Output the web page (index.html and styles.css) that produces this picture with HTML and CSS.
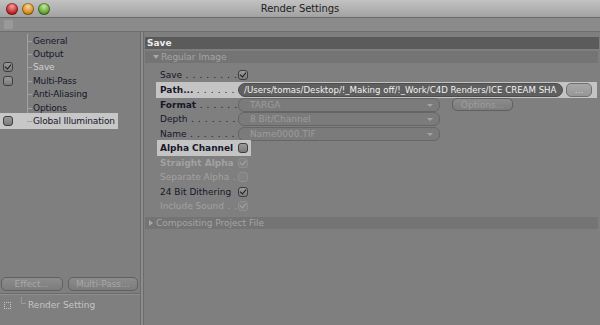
FILE: index.html
```html
<!DOCTYPE html>
<html lang="en">
<head>
    <meta charset="UTF-8">
    <title>Render Settings</title>
    <link rel="stylesheet" href="styles.css">
</head>
<body>
    <div class="window">
        <header class="titlebar">
            <div class="lights">
                <span class="light red"></span>
                <span class="light orange"></span>
                <span class="light green"></span>
            </div>
            <h1>Render Settings</h1>
        </header>
        <div class="toolbar"><span class="grip"></span></div>

        <div class="content">
            <aside class="sidebar">
                <ul class="tree">
                    <li><span class="box none"></span><span class="label">General</span></li>
                    <li><span class="box none"></span><span class="label">Output</span></li>
                    <li><span class="box checked"></span><span class="label dim">Save</span></li>
                    <li><span class="box"></span><span class="label">Multi-Pass</span></li>
                    <li><span class="box none"></span><span class="label">Anti-Aliasing</span></li>
                    <li><span class="box none"></span><span class="label">Options</span></li>
                    <li class="hl"><span class="box"></span><span class="label">Global Illumination</span></li>
                </ul>
                <div class="side-buttons">
                    <button class="btn">Effect...</button>
                    <button class="btn">Multi-Pass...</button>
                </div>
                <div class="side-footer">
                    <span class="node-icon"></span>
                    <span class="footer-label">Render Setting</span>
                </div>
            </aside>

            <main class="panel">
                <div class="panel-title">Save</div>
                <div class="group open">Regular Image</div>

                <div class="rows">
                    <div class="row"><span class="key">Save</span><span class="box checked"></span></div>
                    <div class="row hl-wide"><span class="key bold">Path...</span>
                        <span class="path">/Users/tomas/Desktop/!_Making off/!_Work/C4D Renders/ICE CREAM SHA</span>
                        <span class="btn small">...</span>
                    </div>
                    <div class="row"><span class="key bold">Format</span>
                        <span class="select">TARGA</span>
                        <span class="btn options">Options...</span>
                    </div>
                    <div class="row"><span class="key">Depth</span><span class="select">8 Bit/Channel</span></div>
                    <div class="row"><span class="key">Name</span><span class="select">Name0000.TIF</span></div>
                    <div class="row"><span class="key bold hl-key">Alpha Channel</span><span class="box"></span></div>
                    <div class="row"><span class="key bold off nodots">Straight Alpha</span><span class="box checked off"></span></div>
                    <div class="row"><span class="key off">Separate Alpha</span><span class="box off"></span></div>
                    <div class="row"><span class="key nodots">24 Bit Dithering</span><span class="box checked"></span></div>
                    <div class="row"><span class="key off">Include Sound</span><span class="box checked off"></span></div>
                </div>

                <div class="group closed">Compositing Project File</div>
            </main>
        </div>
    </div>
</body>
</html>
```

FILE: styles.css
```css
/* Render settings window */
body {
    margin: 0;
    width: 600px;
    height: 325px;
    overflow: hidden;
    background-color: #7f7f7f;
    font-family: "DejaVu Sans", Verdana, sans-serif;
    font-size: 9px;
    color: #15172a;
}

.window {
    display: flex;
    flex-direction: column;
    height: 325px;
}

.titlebar {
    position: relative;
    height: 17px;
    background: linear-gradient(#c2c2c2, #a2a2a2);
    border-bottom: 1px solid #6a6a6a;
    display: flex;
    align-items: center;
    justify-content: center;
}

.titlebar h1 {
    margin: 0;
    font-size: 10px;
    font-weight: normal;
    color: #222;
    letter-spacing: -0.1px;
}

.lights {
    position: absolute;
    left: 6px;
    top: 3px;
    display: flex;
    gap: 4px;
}

.light {
    width: 12px;
    height: 12px;
    border-radius: 50%;
    box-shadow: inset 0 0 0 1px rgba(0, 0, 0, 0.35);
}

.red { background: radial-gradient(circle at 50% 30%, #f4a0a0, #c4262a 60%, #8e1a1a); }
.orange { background: radial-gradient(circle at 50% 30%, #f6d79a, #d98d1c 60%, #9a5e10); }
.green { background: radial-gradient(circle at 50% 30%, #c8e8a0, #62a232 60%, #3e6e1c); }

.toolbar {
    height: 13px;
    background-color: #8b8b8b;
    border-bottom: 1px solid #6e6e6e;
    display: flex;
    align-items: center;
    padding-left: 4px;
}

.grip {
    width: 9px;
    height: 9px;
    background-image: radial-gradient(#a9a9a9 0.6px, transparent 0.8px);
    background-size: 2px 2px;
}

.content {
    flex: 1;
    display: flex;
    min-height: 0;
}

/* left side */
.sidebar {
    width: 140px;
    border-right: 1px solid #6c6c6c;
    box-shadow: 2px 0 0 #8d8d8d, 3px 0 0 #6c6c6c;
    display: flex;
    flex-direction: column;
}

.tree {
    list-style: none;
    margin: 2px 0 0;
    padding: 0;
    position: relative;
}

.tree::before {
    content: "";
    position: absolute;
    left: 27px;
    top: 0;
    height: 85px;
    border-left: 1px solid #a2a2a2;
}

.tree li {
    height: 13.4px;
    display: flex;
    align-items: center;
    position: relative;
    width: 118px;
    white-space: nowrap;
}

.tree li::before {
    content: "";
    position: absolute;
    left: 27px;
    width: 5px;
    top: 50%;
    border-top: 1px solid #a2a2a2;
}

.tree li.hl {
    background-color: #c7c7c7;
    height: 16px;
    margin-top: -1px;
}

.tree .label {
    margin-left: 20px;
    letter-spacing: -0.15px;
}

.label.dim {
    color: #cfcfcf;
}

.box {
    display: inline-block;
    box-sizing: border-box;
    width: 10px;
    height: 10px;
    border: 1px solid #3e3e3e;
    border-radius: 3px;
    background: linear-gradient(#9a9a9a, #7a7a7a);
    position: relative;
    flex: none;
}

.tree .box {
    margin-left: 3px;
}

.box.none {
    visibility: hidden;
}

.box.checked::after {
    content: "";
    position: absolute;
    left: 2px;
    top: 0px;
    width: 3px;
    height: 5px;
    border-right: 1.5px solid #1a1a1a;
    border-bottom: 1.5px solid #1a1a1a;
    transform: rotate(40deg);
}

.box.off {
    border-color: #909090;
    background: #838383;
}

.box.off.checked::after {
    border-color: #a6a6a6;
}

.side-buttons {
    margin-top: auto;
    display: flex;
    gap: 5px;
    padding: 0 2px 2px 1px;
    border-bottom: 1px solid #6c6c6c;
}

.btn {
    font: inherit;
    color: #a8a8a8;
    height: 14px;
    padding: 0;
    border: 1px solid #606060;
    border-radius: 5px;
    background: linear-gradient(#8c8c8c, #7c7c7c);
    display: inline-flex;
    align-items: center;
    justify-content: center;
    box-sizing: border-box;
}

.side-buttons .btn:first-child { width: 62px; }
.side-buttons .btn:last-child { width: 71px; }

.side-footer {
    height: 30px;
    display: flex;
    align-items: center;
    position: relative;
    border-top: 1px solid #8e8e8e;
}

.node-icon {
    width: 5px;
    height: 5px;
    margin-left: 4px;
    border: 1px dotted #c8c8c8;
    margin-top: -10px;
}

.side-footer::before {
    content: "";
    position: absolute;
    left: 21px;
    top: 2px;
    width: 4px;
    height: 6px;
    border-left: 1px solid #9a9a9a;
    border-bottom: 1px solid #9a9a9a;
}

.footer-label {
    margin-left: 17px;
    margin-top: -10px;
    color: #c4c4c4;
}

/* right side */
.panel {
    flex: 1;
    margin-left: 4px;
    padding-top: 5px;
    display: flex;
    flex-direction: column;
}

.panel-title {
    height: 12px;
    line-height: 12px;
    background-color: #5b5b5b;
    color: #ececec;
    font-weight: bold;
    padding-left: 2px;
    margin-right: 1px;
}

.group {
    height: 12px;
    line-height: 12px;
    margin-top: 2px;
    margin-right: 2px;
    background-color: #747474;
    color: #a4a4a4;
    padding-left: 16px;
    position: relative;
}

.group::before {
    content: "";
    position: absolute;
    left: 8px;
    top: 4px;
    border-style: solid;
    border-color: transparent;
}

.group.open::before {
    border-width: 4px 3px 0;
    border-top-color: #a8a8a8;
}

.group.closed {
    padding-left: 11px;
}

.group.closed::before {
    left: 4px;
    top: 3px;
    border-width: 3px 0 3px 4px;
    border-left-color: #a8a8a8;
}

.rows {
    padding-top: 5px;
    margin-bottom: 1px;
}

.row {
    height: 14.5px;
    display: flex;
    align-items: center;
    padding-left: 15px;
}

.row.hl-wide {
    background-color: #c4c4c4;
    margin-left: 11px;
    padding-left: 4px;
    margin-right: 3px;
    height: 16px;
    margin-top: -1px;
}

.key {
    width: 78px;
    flex: none;
    white-space: nowrap;
    overflow: hidden;
    position: relative;
}

.key::after {
    content: " . . . . . . . . . . . . . . . . . . . .";
    font-weight: normal;
    letter-spacing: 0.6px;
    color: inherit;
}

.key.nodots::after {
    content: "";
}

.key.bold {
    font-weight: bold;
}

.key.off {
    color: #a2a2a2;
}

.key.hl-key {
    background-color: #c4c4c4;
    margin-left: -3px;
    padding-left: 3px;
    width: 91px;
    height: 16px;
    line-height: 16px;
    margin-right: -13px;
}

.key.hl-key::after {
    content: "";
}

.path {
    flex: none;
    width: 325px;
    height: 14px;
    box-sizing: border-box;
    line-height: 13px;
    padding: 0 3px 0 5px;
    background-color: #5f5f5f;
    border: 1px solid #4e4e4e;
    border-radius: 7px;
    color: #f2f2f2;
    white-space: nowrap;
    overflow: hidden;
    font-size: 8.6px;
}

.btn.small {
    width: 26px;
    margin-left: 3px;
    color: #d0d0d0;
    background: linear-gradient(#a8a8a8, #969696);
    border-color: #707070;
    line-height: 8px;
}

.select {
    width: 202px;
    height: 14px;
    box-sizing: border-box;
    line-height: 12px;
    padding-left: 11px;
    border: 1px solid #666;
    border-radius: 6px;
    background-color: #7b7b7b;
    color: #9b9b9b;
    position: relative;
}

.select::after {
    content: "";
    position: absolute;
    right: 6px;
    top: 5px;
    border-style: solid;
    border-width: 3px 3px 0;
    border-color: #a4a4a4 transparent transparent;
}

.btn.options {
    width: 61px;
    margin-left: 12px;
    height: 13px;
    color: #9e9e9e;
}
```
